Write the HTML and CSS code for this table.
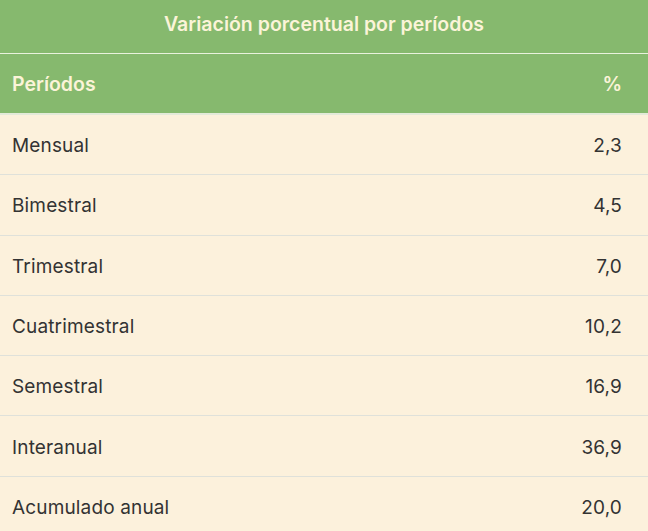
FILE: index.html
```html
<!DOCTYPE html>
<html lang="es">
<head>
<meta charset="utf-8">
<link rel="stylesheet" href="styles.css">
</head>
<body>
<div class="card">
  <div class="title">Variación porcentual por períodos</div>
  <table class="tbl">
    <thead>
      <tr><th class="c-name">Períodos</th><th class="c-val">%</th></tr>
    </thead>
    <tbody>
      <tr><td class="c-name">Mensual</td><td class="c-val">2,3</td></tr>
      <tr><td class="c-name">Bimestral</td><td class="c-val">4,5</td></tr>
      <tr><td class="c-name">Trimestral</td><td class="c-val">7,0</td></tr>
      <tr><td class="c-name">Cuatrimestral</td><td class="c-val">10,2</td></tr>
      <tr><td class="c-name">Semestral</td><td class="c-val">16,9</td></tr>
      <tr><td class="c-name">Interanual</td><td class="c-val">36,9</td></tr>
      <tr><td class="c-name">Acumulado anual</td><td class="c-val">20,0</td></tr>
    </tbody>
  </table>
</div>
</body>
</html>
```
FILE: styles.css
```css
html, body {
  margin: 0;
  padding: 0;
  background: #fcf1dc;
}
body {
  font-family: Inter, "Noto Sans", sans-serif;
  width: 648px;
}
.card {
  width: 648px;
}
.title {
  background: #86b96e;
  color: #fbf4d8;
  height: 53px;
  line-height: 48px;
  text-align: center;
  font-weight: 600;
  font-size: 19.5px;
  border-bottom: 1px solid #e9f2dd;
}
.tbl {
  width: 100%;
  border-collapse: collapse;
}
.tbl th {
  background: #86b96e;
  color: #fbf4d8;
  font-weight: 600;
  font-size: 19.5px;
  height: 59px;
  padding: 0;
  border-bottom: 2px solid #e3ead9;
}
.tbl td {
  color: #333333;
  font-size: 19px;
  font-weight: 400;
  letter-spacing: 0.15px;
  height: 57.3px;
  padding: 2px 0 0 0;
  border-bottom: 1px solid #dfe1da;
}
.c-name {
  text-align: left;
  padding-left: 12px !important;
}
.c-val {
  text-align: right;
  padding-right: 26px !important;
}
```
